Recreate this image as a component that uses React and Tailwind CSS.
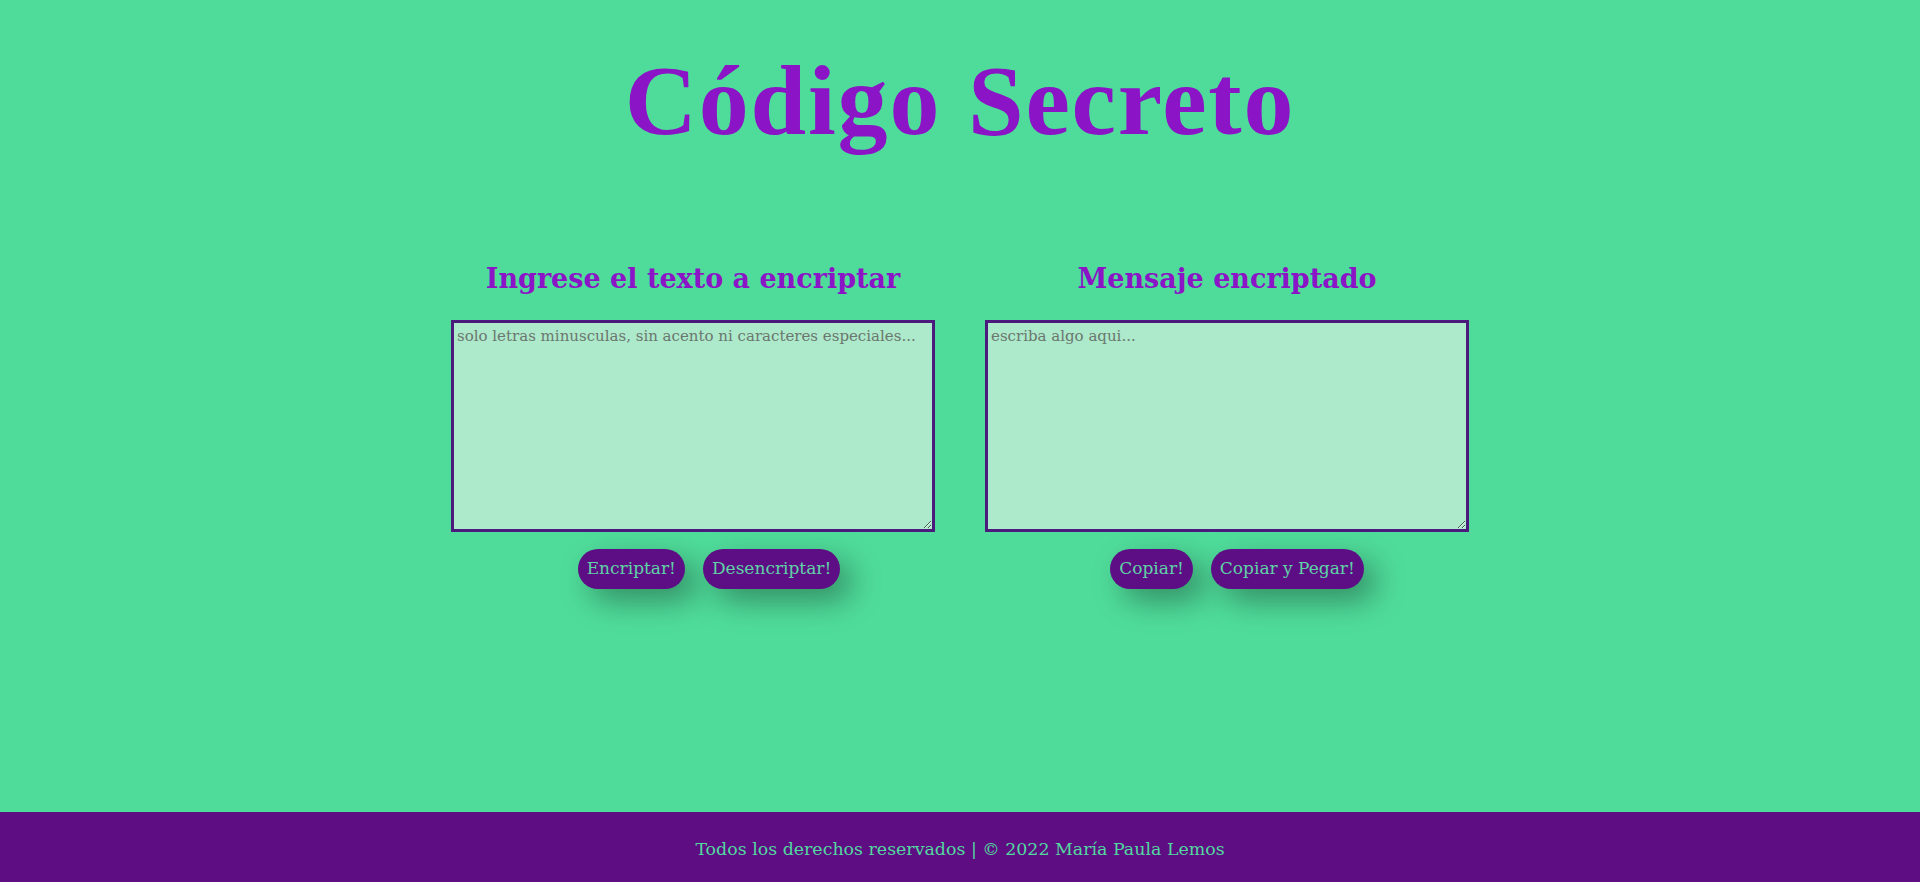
import { useState } from 'react';

const titleFont = { fontFamily: '"Liberation Serif", "DejaVu Serif", serif' };
const serif = { fontFamily: '"DejaVu Serif", "Liberation Serif", serif' };

function Panel({ title, placeholder, value, onChange, buttons, shift }) {
  return (
    <div className="flex w-[484px] flex-col items-center">
      <h2 style={serif} className="text-[27px] font-bold leading-none text-[#8b14c6]">
        {title}
      </h2>
      <textarea
        value={value}
        onChange={onChange}
        placeholder={placeholder}
        style={serif}
        className="mt-[28px] h-[212px] w-full border-[3px] border-[#4b1a7c] bg-[#ade9cb] px-[3px] py-[2px] text-[15px] text-[#333] placeholder:text-[#6a776e] outline-none"
      />
      <div className={`mt-[17px] flex gap-[18px] ${shift}`}>
        {buttons.map((b) => (
          <button
            key={b.label}
            onClick={b.onClick}
            style={serif}
            className="h-[40px] rounded-full bg-[#5e0e85] px-[9px] text-[17px] text-[#5fd3a6] shadow-[12px_12px_30px_rgba(0,0,0,0.35)]"
          >
            {b.label}
          </button>
        ))}
      </div>
    </div>
  );
}

export default function App() {
  const [input, setInput] = useState('');
  const [output, setOutput] = useState('');

  const encrypt = () =>
    setOutput(
      input
        .replace(/e/g, 'enter')
        .replace(/i/g, 'imes')
        .replace(/a/g, 'ai')
        .replace(/o/g, 'ober')
        .replace(/u/g, 'ufat')
    );
  const decrypt = () =>
    setOutput(
      input
        .replace(/enter/g, 'e')
        .replace(/imes/g, 'i')
        .replace(/ai/g, 'a')
        .replace(/ober/g, 'o')
        .replace(/ufat/g, 'u')
    );
  const copy = () => navigator.clipboard?.writeText(output).catch(() => {});
  const copyPaste = () => setInput(output);

  return (
    <div className="flex h-[882px] flex-col bg-[#4fdc9a]">
      <h1 style={titleFont} className="mt-[51px] text-center text-[100px] font-bold leading-none tracking-[1.8px] text-[#8b14c6]">
        Código Secreto
      </h1>

      <main className="mt-[114px] flex justify-center gap-[50px]">
        <Panel
          title="Ingrese el texto a encriptar"
          placeholder="solo letras minusculas, sin acento ni caracteres especiales..."
          value={input}
          onChange={(e) => setInput(e.target.value)}
          shift="ml-[32px]"
          buttons={[
            { label: 'Encriptar!', onClick: encrypt },
            { label: 'Desencriptar!', onClick: decrypt },
          ]}
        />
        <Panel
          title="Mensaje encriptado"
          placeholder="escriba algo aqui..."
          value={output}
          onChange={(e) => setOutput(e.target.value)}
          shift="ml-[20px]"
          buttons={[
            { label: 'Copiar!', onClick: copy },
            { label: 'Copiar y Pegar!', onClick: copyPaste },
          ]}
        />
      </main>

      <footer className="mt-auto flex h-[70px] items-center justify-center bg-[#5f0d83] pt-[4px]">
        <p style={serif} className="text-[17.4px] text-[#52d9a0]">
          Todos los derechos reservados | © 2022 María Paula Lemos
        </p>
      </footer>
    </div>
  );
}
